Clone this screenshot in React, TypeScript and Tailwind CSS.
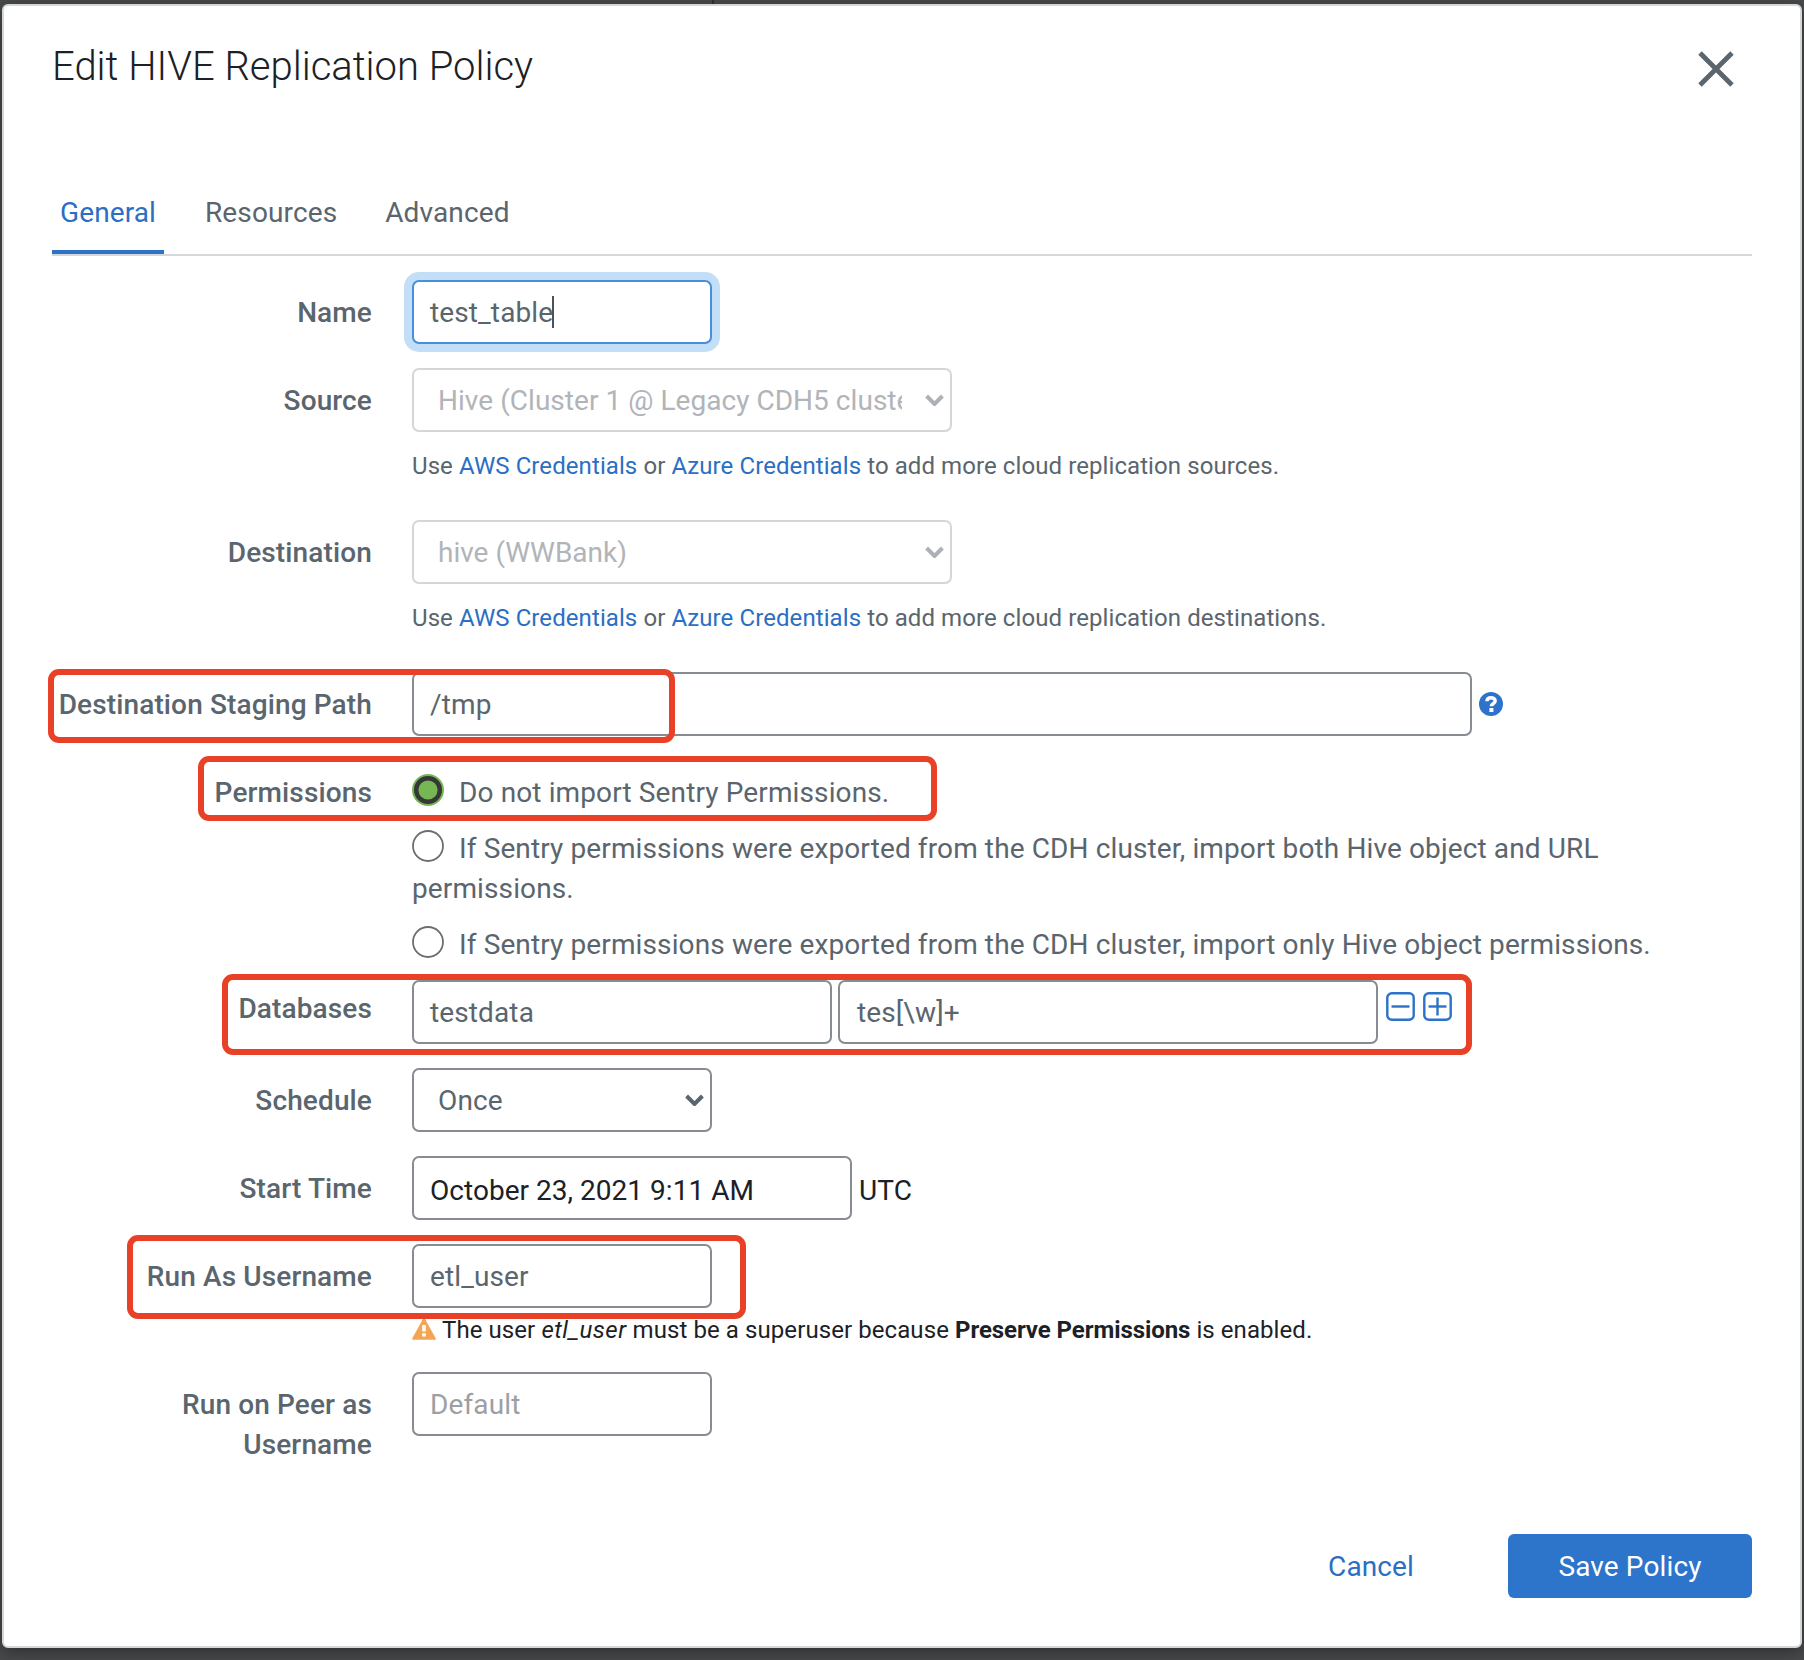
import type { ReactNode } from "react";

const input =
  "flex h-16 items-center rounded-[7px] border-2 border-[#868c92] bg-white pl-4 pt-0.5";

function Row({
  label,
  children,
  highlight,
  className = "mb-6",
  labelClass = "pt-[13px]",
}: {
  label: string;
  children: ReactNode;
  highlight?: string;
  className?: string;
  labelClass?: string;
}) {
  return (
    <div className={"relative flex gap-10 " + className}>
      <div
        className={
          "w-80 shrink-0 text-right font-medium tracking-[0.13px] leading-10 " + labelClass
        }
      >
        {label}
      </div>
      <div className="w-[1340px]">{children}</div>
      {highlight && (
        <div
          className={
            "pointer-events-none absolute rounded-[11px] border-[6px] border-[#e84128] " +
            highlight
          }
        />
      )}
    </div>
  );
}

function Chevron({ className }: { className: string }) {
  return (
    <svg width="19" height="12" viewBox="0 0 19 12" fill="none" className={className}>
      <path d="M1.6 2l7.9 8 7.9-8" stroke="currentColor" strokeWidth="4" />
    </svg>
  );
}

function Help({ kind }: { kind: string }) {
  return (
    <p className="mt-4 mb-9 h-9 text-[24px] leading-9 tracking-[0.085px]">
      Use <a className="text-[#2a6fc3]">AWS Credentials</a> or{" "}
      <a className="text-[#2a6fc3]">Azure Credentials</a> to add more cloud replication {kind}.
    </p>
  );
}

function Radio({ checked }: { checked?: boolean }) {
  return (
    <svg
      width="32"
      height="32"
      viewBox="0 0 32 32"
      className="mr-[15px] inline-block align-[-4px]"
    >
      {checked ? (
        <>
          <circle cx="16" cy="16" r="16" fill="#76b753" />
          <circle cx="16" cy="16" r="11.8" fill="none" stroke="#353836" strokeWidth="4.4" />
        </>
      ) : (
        <circle cx="16" cy="16" r="15" fill="#fff" stroke="#6b6f73" strokeWidth="1.8" />
      )}
    </svg>
  );
}

function BoxIcon({ plus }: { plus?: boolean }) {
  return (
    <svg
      width="29"
      height="29"
      viewBox="0 0 29 29"
      fill="none"
      stroke="#2b72c8"
      strokeWidth="2.4"
      className="mt-[12px]"
    >
      <rect x="1.3" y="1.3" width="26.4" height="26.4" rx="4.5" />
      <path d="M5.5 14.5h18" />
      {plus && <path d="M14.5 5.5v18" />}
    </svg>
  );
}

export default function App() {
  return (
    <div className="relative flex h-[1660px] w-[1804px] flex-col bg-[#48494a] px-0.5 pt-1 font-['Roboto',sans-serif] text-[28px] tracking-[0.12px] text-[#5a656d]">
      <div className="absolute top-0 left-[712px] h-1 w-0.5 bg-[#2c2d2e]" />
      <div className="flex h-[1644px] flex-col rounded-[6px] border-2 border-[#d6d7d8] bg-white pr-12 pl-12 shadow-[0_4px_16px_rgba(0,0,0,0.35)]">
        <header className="flex h-[186px] justify-between pt-[31px]">
          <h1 className="text-[40px] leading-[60px] font-light tracking-normal text-[#1b2126]">
            Edit HIVE Replication Policy
          </h1>
          <svg
            width="36"
            height="36"
            viewBox="0 0 36 36"
            stroke="#5a656d"
            strokeWidth="4.8"
            className="mt-3.5 mr-[18px]"
          >
            <path d="M2 2l32 32M34 2L2 34" />
          </svg>
        </header>

        <nav className="flex h-16 gap-8 border-b-2 border-[#d6d7d8] leading-10">
          <span className="h-[62px] w-28 border-b-4 border-[#2d73ca] pt-px pl-2 text-[#2a6fc3]">
            General
          </span>
          <span className="pt-px pr-2 pl-[9px]">Resources</span>
          <span className="px-2 pt-px">Advanced</span>
        </nav>

        <main className="mt-6 flex flex-col">
          <Row label="Name">
            <div className="flex h-16 w-[300px] items-center rounded-[7px] border-2 border-[#458ee0] bg-white pt-0.5 pl-4 shadow-[0_0_0_8px_#c3dff8]">
              test_table
              <span className="mb-0.5 -ml-px h-8 w-0.5 bg-[#4b5359]" />
            </div>
          </Row>

          <Row label="Source" className="">
            <div className="flex h-16 w-[540px] items-center justify-between rounded-[7px] border-2 border-[#d5d6d8] pr-[6px] pl-6 tracking-[0.04px] text-[#b1b4b8]">
              <span className="w-[464px] overflow-hidden pt-0.5 leading-10 whitespace-nowrap">
                Hive (Cluster 1 @ Legacy CDH5 cluster)
              </span>
              <Chevron className="text-[#adb1b5]" />
            </div>
            <Help kind="sources" />
          </Row>

          <Row label="Destination" className="">
            <div className="flex h-16 w-[540px] items-center justify-between rounded-[7px] border-2 border-[#d5d6d8] pr-[6px] pl-6 tracking-normal text-[#b1b4b8]">
              <span className="pt-0.5">hive (WWBank)</span>
              <Chevron className="text-[#adb1b5]" />
            </div>
            <Help kind="destinations" />
          </Row>

          <Row
            label="Destination Staging Path"
            className="mb-9"
            highlight="-left-1 -top-[3px] h-[74px] w-[627px]"
          >
            <div className="flex items-center gap-[7px]">
              <div className={input + " w-[1060px]"}>/tmp</div>
              <svg width="24" height="24" viewBox="0 0 24 24">
                <circle cx="12" cy="12" r="12" fill="#2d73ca" />
                <path
                  d="M7.9 9.3C8 7 9.8 5.8 12.1 5.8c2.4 0 4.1 1.3 4.1 3.2 0 2.7-3.9 2.7-3.9 5.2"
                  fill="none"
                  stroke="#fff"
                  strokeWidth="3.4"
                />
                <path d="M10.4 16h4v4h-4z" fill="#fff" />
              </svg>
            </div>
          </Row>

          <Row
            label="Permissions"
            className="mb-4"
            labelClass="pt-px"
            highlight="left-[146px] -top-4 h-[65px] w-[739px]"
          >
            <div className="flex flex-col gap-4 leading-10">
              <p className="h-10 pt-px">
                <Radio checked />
                Do not import Sentry Permissions.
              </p>
              <p className="h-20 w-[1300px] pt-px">
                <Radio />
                If Sentry permissions were exported from the CDH cluster, import both Hive object
                and URL permissions.
              </p>
              <p className="h-10 pt-px">
                <Radio />
                If Sentry permissions were exported from the CDH cluster, import only Hive object
                permissions.
              </p>
            </div>
          </Row>

          <Row
            label="Databases"
            labelClass="pt-[9px]"
            highlight="left-[169.5px] -top-[6px] h-[81px] w-[1250px]"
          >
            <div className="flex">
              <div className={input + " mr-1.5 w-[420px]"}>testdata</div>
              <div className={input + " mr-2 w-[540px]"}>
                <span className="pl-px">tes[\w]+</span>
              </div>
              <div className="flex gap-[8px]">
                <BoxIcon />
                <BoxIcon plus />
              </div>
            </div>
          </Row>

          <Row label="Schedule">
            <div className="flex h-16 w-[300px] items-center justify-between rounded-[7px] border-2 border-[#868c92] pr-[6px] pl-6">
              <span className="pt-0.5">Once</span>
              <Chevron className="text-[#5a656d]" />
            </div>
          </Row>

          <Row label="Start Time">
            <div className="flex items-center gap-[7px] text-[#1b2126]">
              <div className="flex h-16 w-[440px] items-center rounded-[7px] border-2 border-[#868c92] pt-1.5 pl-4 tracking-[0.03px]">
                October 23, 2021 9:11 AM
              </div>
              <span className="pt-1.5">UTC</span>
            </div>
          </Row>

          <Row
            label="Run As Username"
            highlight="left-[75px] -top-[9px] h-[84px] w-[619px]"
          >
            <div className={input + " w-[300px]"}>etl_user</div>
            <p className="mt-1 h-9 text-[24px] leading-9 tracking-[0.08px] text-[#1b2126]">
              <svg
                width="24"
                height="22"
                viewBox="0 0 24 22"
                className="mr-1.5 inline-block align-[-2px]"
              >
                <path
                  d="M12 1.2L22.8 20.8H1.2z"
                  fill="#f2a654"
                  stroke="#f2a654"
                  strokeWidth="2"
                  strokeLinejoin="round"
                />
                <path d="M10.2 7h3.600v6.500h-3.600zM10.200 15.300h3.600v3.200h-3.600z" fill="#fff" />
              </svg>
              The user <i className="tracking-[0.5px]">etl_user</i> must be a superuser because{" "}
              <strong className="font-bold tracking-[-0.07px]">Preserve Permissions</strong> is
              enabled.
            </p>
          </Row>

          <Row label="Run on Peer as Username" labelClass="pt-[13px] pl-20">
            <div className={input + " w-[300px] text-[#9c9fa3]"}>Default</div>
          </Row>
        </main>

        <footer className="mt-[45px] flex items-center justify-end gap-[94px]">
          <button className="pt-0.5 leading-10 text-[#2a6fc3]">Cancel</button>
          <button className="h-16 w-[244px] rounded-[6px] bg-[#2d74cb] pt-0.5 text-white">
            Save Policy
          </button>
        </footer>
      </div>
    </div>
  );
}
